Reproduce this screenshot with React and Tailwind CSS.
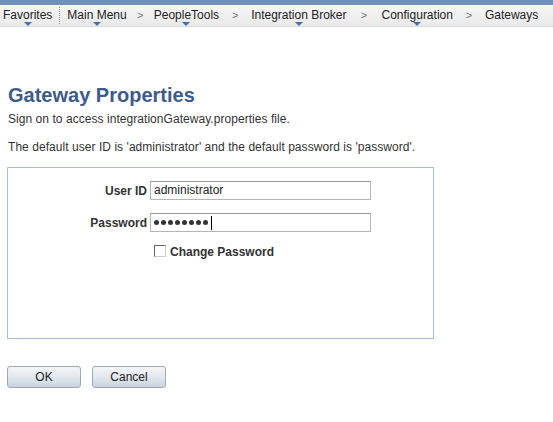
const crumbs = [
  { label: 'Favorites', menu: true },
  { label: 'Main Menu', menu: true },
  { label: 'PeopleTools', menu: true, gap: 'w-[27px]' },
  { label: 'Integration Broker', menu: true, gap: 'w-[32px]' },
  { label: 'Configuration', menu: true, gap: 'w-[35px]' },
  { label: 'Gateways', menu: false, gap: 'w-[32px]' },
];

function Crumb({ label, menu }) {
  return (
    <span className="relative inline-block whitespace-nowrap leading-[20px]">
      {label}
      {menu && (
        <span className="absolute left-1/2 -translate-x-1/2 top-[17px] w-0 h-0 border-l-[4px] border-r-[4px] border-t-[4px] border-l-transparent border-r-transparent border-t-[#3b73b9]" />
      )}
    </span>
  );
}

export default function App() {
  return (
    <div className="w-[553px] h-[422px] bg-white text-[#333] font-['Liberation_Sans',Arial,sans-serif] overflow-hidden">
      <div className="h-[5px] bg-[#6d90b9]" />
      <div className="h-[22px] bg-gradient-to-b from-[#f7f7f7] to-[#e9e9e9] border-b border-[#dcdcdc] flex items-start whitespace-nowrap text-[12px] text-[#222] pl-[3px]">
        <Crumb {...crumbs[0]} />
        <span className="ml-[7px] mr-[7px] mt-[2px] h-[17px] border-l border-dotted border-[#999]" />
        <Crumb {...crumbs[1]} />
        {crumbs.slice(2).map((c) => (
          <div key={c.label} className="flex items-start">
            <span className={`${c.gap} text-center text-[11px] text-[#777] leading-[21px]`}>&gt;</span>
            <Crumb {...c} />
          </div>
        ))}
      </div>

      <div className="px-[8px]">
        <h1 className="mt-[56px] text-[20px] leading-[24px] font-bold text-[#3d5b8b]">Gateway Properties</h1>
        <p className="mt-[5px] text-[12px] leading-[14px] tracking-[0.05px]">Sign on to access integrationGateway.properties file.</p>
        <p className="mt-[14px] text-[12px] leading-[14px] tracking-[0.05px]">
          The default user ID is 'administrator' and the default password is 'password'.
        </p>
      </div>

      <div className="ml-[7px] mt-[13px] w-[427px] h-[172px] border border-[#a5bdd6]">
        <div className="mt-[13px] flex items-center">
          <label className="w-[142px] text-right text-[12px] font-bold pr-[3px]">User ID</label>
          <div className="w-[221px] h-[19px] border border-[#b5b5b5] border-t-[#9a9a9a] px-[3px] text-[12px] leading-[16px] text-[#222]">
            administrator
          </div>
        </div>
        <div className="mt-[13px] flex items-center">
          <label className="w-[142px] text-right text-[12px] font-bold pr-[3px]">Password</label>
          <div className="w-[221px] h-[19px] border border-[#b5b5b5] border-t-[#9a9a9a] px-[3px] flex items-center gap-[2px]">
            {[0, 1, 2, 3, 4, 5, 6, 7].map((i) => (
              <span key={i} className="w-[5px] h-[5px] rounded-full bg-[#333]" />
            ))}
            <span className="ml-[1px] w-px h-[14px] bg-black" />
          </div>
        </div>
        <div className="mt-[10px] flex items-center">
          <span className="ml-[146px] w-[12px] h-[12px] border border-[#666] border-r-[#ccc] border-b-[#ccc] bg-white" />
          <span className="ml-[4px] text-[12px] font-bold leading-[16px] mt-[2px]">Change Password</span>
        </div>
      </div>

      <div className="mt-[27px] ml-[7px] flex gap-[11px]">
        <button className="w-[74px] h-[22px] rounded-[3px] border border-[#a0a8b2] bg-gradient-to-b from-[#f4f6f8] via-[#e3e8ee] to-[#c9d3de] text-[12px] text-[#222]">
          OK
        </button>
        <button className="w-[74px] h-[22px] rounded-[3px] border border-[#a0a8b2] bg-gradient-to-b from-[#f4f6f8] via-[#e3e8ee] to-[#c9d3de] text-[12px] text-[#222]">
          Cancel
        </button>
      </div>
    </div>
  );
}
